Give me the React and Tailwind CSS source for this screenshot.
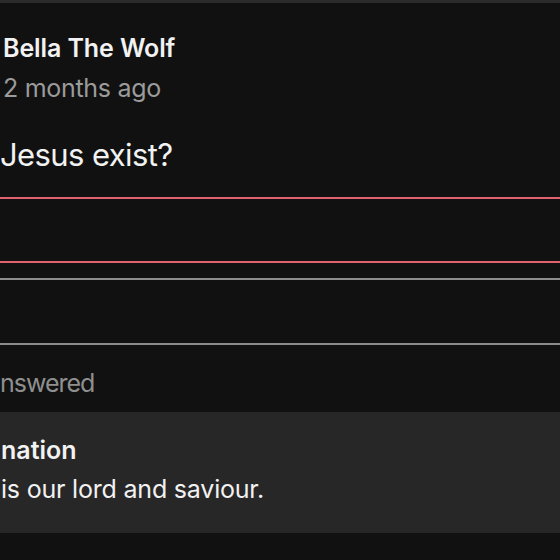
export default function App() {
  return (
    <div className="w-[560px] h-[560px] overflow-hidden bg-[#111111] font-['Inter',sans-serif] text-[#f2f2f2]">
      <div className="h-[3px] bg-[#2b2b2b]" />

      <div className="pl-[3px] mt-[29px]">
        <div className="text-[25px] leading-[32px] font-semibold tracking-[-0.1px]">Bella The Wolf</div>
        <div className="mt-[8px] text-[25px] leading-[32px] tracking-[-0.3px] text-[#9b9b9b]">2 months ago</div>
      </div>

      <div className="mt-[31px] text-[31px] leading-[40px] tracking-[-0.6px]">Jesus exist?</div>

      <div className="mt-[22px] h-[66px] border-y-2 border-[#e2626f]" />
      <div className="mt-[15px] h-[67px] border-y-2 border-[#8c8c8c]" />

      <div className="mt-[22px] text-[25px] leading-[32px] tracking-[-1px] text-[#8f8f8f]">nswered</div>

      <div className="mt-[13px] h-[121px] bg-[#272727] pt-[22px]">
        <div className="pl-[1px] text-[25px] leading-[32px] font-semibold">nation</div>
        <div className="mt-[7px] pl-[1px] text-[25px] leading-[32px] tracking-[-0.2px]">is our lord and saviour.</div>
      </div>
    </div>
  );
}
